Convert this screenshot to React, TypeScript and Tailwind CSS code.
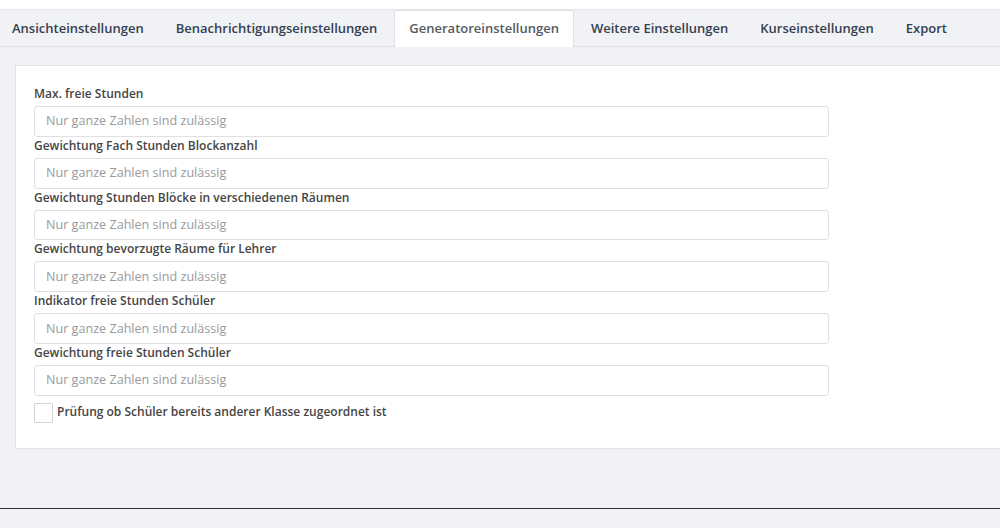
import React from "react";

const tabs = [
  "Ansichteinstellungen",
  "Benachrichtigungseinstellungen",
  "Generatoreinstellungen",
  "Weitere Einstellungen",
  "Kurseinstellungen",
  "Export",
];

const fields = [
  "Max. freie Stunden",
  "Gewichtung Fach Stunden Blockanzahl",
  "Gewichtung Stunden Blöcke in verschiedenen Räumen",
  "Gewichtung bevorzugte Räume für Lehrer",
  "Indikator freie Stunden Schüler",
  "Gewichtung freie Stunden Schüler",
];

export default function App() {
  return (
    <div
      className="w-[1000px] h-[528px] overflow-hidden bg-[#f1f2f6]"
      style={{ fontFamily: '"Open Sans", "Noto Sans", sans-serif' }}
    >
      <div className="h-[9px] bg-white border-b border-[#e4e5e9] box-content" />
      <div className="h-[37px] border-b border-[#dfe0e4] bg-[#f1f2f6] flex items-end ml-[-3px]">
        {tabs.map((t, i) => {
          const active = i === 2;
          return (
            <div
              key={t}
              className={
                "h-[36px] px-[14px] pb-[2px] mr-[2px] mb-[-1px] flex items-center whitespace-nowrap text-[13px] font-semibold leading-none rounded-t-[3px] border border-b-0 " +
                (active
                  ? "bg-white border-[#e0e1e5] text-[#555a62] h-[37px]"
                  : "border-transparent text-[#34404f]")
              }
            >
              {t}
            </div>
          );
        })}
      </div>
      <div className="pt-[18px] pl-[15px]">
        <div className="bg-white border border-r-0 border-[#e2e3e6] h-[384px] pt-[19px] pl-[18px]">
          {fields.map((f) => (
            <div key={f}>
              <div className="h-[17px] mb-[4px] text-[12px] font-semibold leading-[17px] text-[#454545]">
                {f}
              </div>
              <div className="w-[795px] h-[30.8px] border border-[#e0e0e0] rounded-[3px] flex items-center pl-[11px] pt-[1px] text-[12.6px] text-[#9a9a9a]">
                Nur ganze Zahlen sind zulässig
              </div>
            </div>
          ))}
          <div className="flex items-center mt-[7px]">
            <div className="w-[19px] h-[20px] border border-[#d8d2cc] rounded-[1px]" />
            <div className="ml-[4px] text-[12px] font-semibold text-[#454545] leading-[17px] mt-[-3px]">
              Prüfung ob Schüler bereits anderer Klasse zugeordnet ist
            </div>
          </div>
        </div>
      </div>
      <div className="mt-[59px] h-px bg-[#333]" />
    </div>
  );
}
